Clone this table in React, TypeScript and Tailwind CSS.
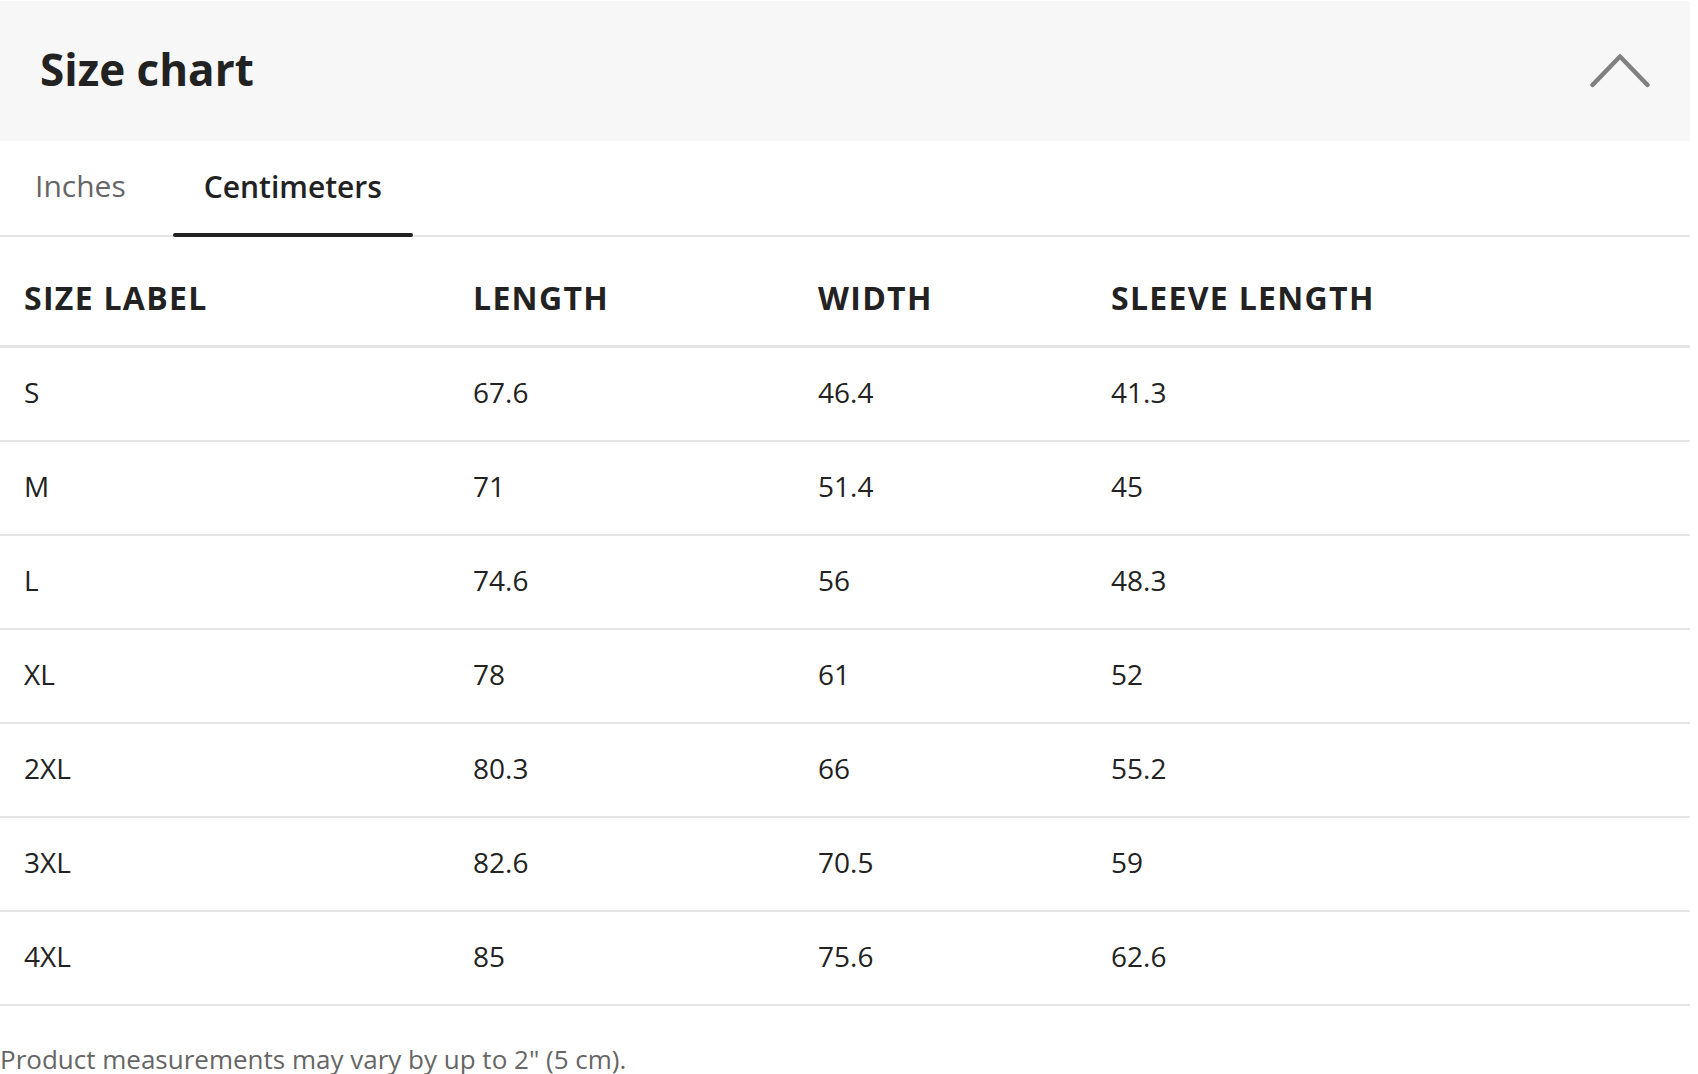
import { useState } from 'react'

const rows = [
  ['S', '67.6', '46.4', '41.3'],
  ['M', '71', '51.4', '45'],
  ['L', '74.6', '56', '48.3'],
  ['XL', '78', '61', '52'],
  ['2XL', '80.3', '66', '55.2'],
  ['3XL', '82.6', '70.5', '59'],
  ['4XL', '85', '75.6', '62.6'],
]

const columns = ['Size label', 'Length', 'Width', 'Sleeve length']

export default function App() {
  const [unit, setUnit] = useState<'in' | 'cm'>('cm')
  const [open, setOpen] = useState(true)

  return (
    <div className="w-[1690px] bg-white pt-[1px] font-['Open_Sans',sans-serif] text-[#222]">
      <div className="flex h-[140px] items-center justify-between bg-[#f7f7f7] pb-[4px] pl-[40px] pr-[40px]">
        <h2 className="text-[44px] font-bold leading-none">Size chart</h2>
        <button onClick={() => setOpen((o) => !o)}>
          <svg width="60" height="37" viewBox="0 0 60 37" fill="none">
            <path
              d="M2.5 34 L30 5.5 L57.5 34"
              stroke="#808080"
              strokeWidth="4.5"
              strokeLinecap="round"
              strokeLinejoin="round"
            />
          </svg>
        </button>
      </div>

      {open && (
        <>
          <div className="flex h-[96px] gap-[15px] border-b-2 border-[#e5e5e5] pl-[3px]">
            <button
              onClick={() => setUnit('in')}
              className={`relative flex items-center px-[32px] pb-[6px] text-[30px] ${unit === 'in' ? 'font-semibold text-[#222]' : 'text-[#666]'}`}
            >
              Inches
            </button>
            <button
              onClick={() => setUnit('cm')}
              className={`relative -mb-[2px] flex items-center px-[31px] pb-[6px] text-[30px] ${unit === 'cm' ? 'font-semibold text-[#222]' : 'text-[#666]'}`}
            >
              Centimeters
              {unit === 'cm' && (
                <span className="absolute bottom-0 left-0 right-0 h-[4px] rounded-full bg-[#222]" />
              )}
            </button>
          </div>

          <div className="grid h-[111px] grid-cols-[449px_345px_293px_1fr] items-center border-b-[3px] border-[#e5e5e5] pl-[24px] pt-[13px]">
            {columns.map((c) => (
              <div key={c} className="text-[32px] font-bold uppercase tracking-[1.3px]">
                {c}
              </div>
            ))}
          </div>

          {rows.map((r) => (
            <div
              key={r[0]}
              className="grid h-[94px] grid-cols-[449px_345px_293px_1fr] items-center border-b-2 border-[#e5e5e5] pb-[4px] pl-[24px]"
            >
              {r.map((v, i) => (
                <div key={i} className="text-[28px]">
                  {v}
                </div>
              ))}
            </div>
          ))}

          <p className="mt-[37px] text-[26px] leading-[32px] text-[#666]">
            Product measurements may vary by up to 2" (5 cm).
          </p>
        </>
      )}
    </div>
  )
}
